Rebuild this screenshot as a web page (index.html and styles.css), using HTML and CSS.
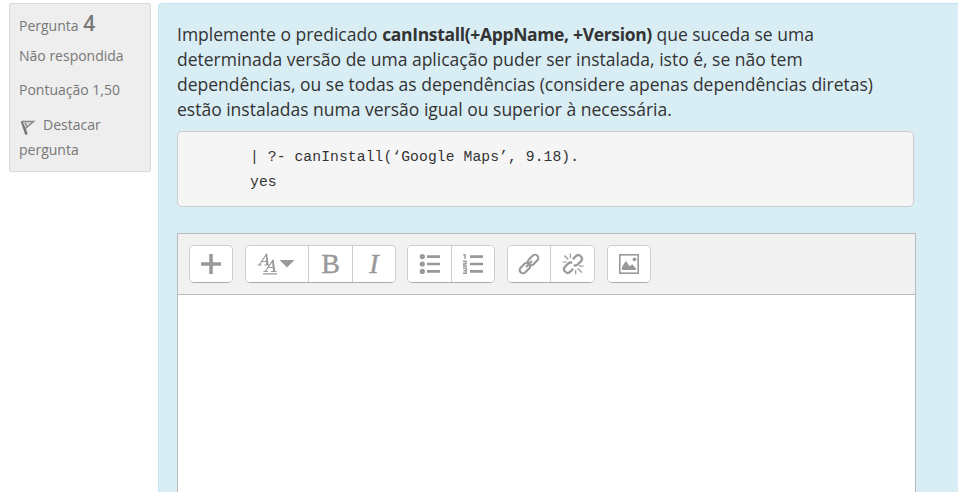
FILE: index.html
```html
<!DOCTYPE html>
<html lang="pt">
<head>
<meta charset="utf-8">
<title>Pergunta 4</title>
<link rel="stylesheet" href="styles.css">
</head>
<body>
<div class="question">
  <aside class="info">
    <h3 class="number">Pergunta <b>4</b></h3>
    <p class="state">Não respondida</p>
    <p class="grade">Pontuação 1,50</p>
    <p class="flag"><svg class="flag-icon" width="16" height="17" viewBox="0 0 16 17"><path d="M2 2 6.5 15.5" stroke="#777" stroke-width="2.6" fill="none"/><path d="M2.5 2.6H13.5L5.7 9.2" fill="#ddd" stroke="#888" stroke-width="1.5"/><path d="m5 4 2 3.5" stroke="#888" stroke-width="1.5"/></svg>Destacar<br>pergunta</p>
  </aside>
  <main class="content">
    <p class="text">Implemente o predicado <b>canInstall(+AppName, +Version)</b> que suceda se uma<br>
    determinada versão de uma aplicação puder ser instalada, isto é, se não tem<br>
    dependências, ou se todas as dependências (considere apenas dependências diretas)<br>
    estão instaladas numa versão igual ou superior à necessária.</p>
    <pre class="code">| ?- canInstall(‘Google Maps’, 9.18).
yes</pre>
    <div class="editor">
      <div class="toolbar">
        <div class="group">
          <button class="btn"><svg width="22" height="22" viewBox="0 0 22 22"><path d="M1 11H21M11 1V21" stroke="#999" stroke-width="3.6"/></svg></button>
        </div>
        <div class="group">
          <button class="btn wide"><svg class="styles-icon" width="38" height="22" viewBox="0 0 38 22"><path d="M.5 12H4.500M7.500 12H12M2.200 12 9.300 1.500 10.200 12M4.800 8.500H9.800" fill="none" stroke="#999" stroke-width="1.200"/><path d="M8.800 1H10.200L11.600 12H9.300Z" fill="#999"/><path d="M6.500 18.500H11M14 18.500H19.500M8.200 18.500 15.800 7.500 16.800 18.500M11 14.500H16.300M6 20.800H20" fill="none" stroke="#999" stroke-width="1.200"/><path d="M15.300 7H16.700L18.300 18.500H16Z" fill="#999"/><path d="M22.500 7h15L30 14.500Z" fill="#999"/></svg></button>
          <button class="btn bold">B</button>
          <button class="btn italic">I</button>
        </div>
        <div class="group lists">
          <button class="btn"><svg width="22" height="22" viewBox="0 0 22 22"><g fill="#999"><circle cx="3.300" cy="3.600" r="2.600"/><circle cx="3.300" cy="11" r="2.600"/><circle cx="3.300" cy="18.400" r="2.600"/></g><path d="M8 3.600H21M8 11H21M8 18.400H21" stroke="#999" stroke-width="2.600"/></svg></button>
          <button class="btn"><svg width="22" height="22" viewBox="0 0 22 22"><path d="M8 3.600H21M8 11H21M8 18.400H21" stroke="#999" stroke-width="2.600"/><path d="M1.200 1.800H3V6M1 8.200H4V10.800H1.800V13H5M1 15.200H4.200V20.300H1M1.500 17.800H4" fill="none" stroke="#999" stroke-width="1.400"/></svg></button>
        </div>
        <div class="group">
          <button class="btn"><svg width="22" height="22" viewBox="0 0 22 22"><g fill="none" stroke="#999" stroke-width="2.100"><rect x="9.100" y="3.600" width="12" height="6.600" rx="3.300" transform="rotate(-45 15.100 6.900)"/><rect x=".9" y="11.800" width="12" height="6.600" rx="3.300" transform="rotate(-45 6.900 15.100)"/><path d="m8 14 6-6"/></g></svg></button>
          <button class="btn"><svg width="22" height="22" viewBox="0 0 22 22"><g fill="none" stroke="#999" stroke-width="2.300"><path d="m10.800 6.200 3-3c3-3 8.300 1.500 5.200 5l-3.500 3.500c-1.300 1.100-2.500 1-3.600.4M11.200 15.800l-3 3c-3 3-8.300-1.500-5.200-5l3.500-3.500c1.300-1.100 2.500-1 3.600-.4"/><path d="M8.300.5v4.500M2.300 2.500l4 4M.5 9H5M13.700 17V21.500M15.800 15.500l4 4M17 13.200H21.500" stroke-width="1.200"/></g></svg></button>
        </div>
        <div class="group">
          <button class="btn"><svg width="22" height="22" viewBox="0 0 22 22"><rect x="1.800" y="1.800" width="18.400" height="18.400" fill="none" stroke="#999" stroke-width="1.600"/><path d="M4 17V14L7.800 8l4 5.200 2.400-2 3.800 4.300V17Z" fill="#999"/><circle cx="16.500" cy="6.300" r="1.900" fill="#999"/></svg></button>
        </div>
      </div>
      <div class="area"></div>
    </div>
  </main>
</div>
</body>
</html>
```
FILE: styles.css
```css
* { box-sizing: border-box; }
body { margin: 0; background: #fff; font-family: "Open Sans", sans-serif; }
.question { display: flex; align-items: flex-start; gap: 7px; height: 492px; overflow: hidden; padding: 3px 0 0 9px; }
.info { width: 142px; height: 169px; flex: none; padding: 9px 9px 0; border: 1px solid #d9d9d9; border-radius: 2px; background: #eee; color: #777; font-size: 14px; line-height: 25px; }
.info p, .info h3 { margin: 0; white-space: nowrap; }
.info .number { font-size: 14px; font-weight: 400; height: 30px; line-height: 25px; }
.number b { font-size: 21px; line-height: 20px; font-weight: 600; margin-left: 1px; }
.state { height: 34px; }
.grade { height: 35px; }
.flag-icon { margin: 0 7px 0 1px; vertical-align: -6px; }
.content { width: 810px; height: 489px; flex: none; padding: 18px 18px 0; border: 1px solid #bce8f1; border-bottom: 0; border-radius: 4px 4px 0 0; background: #d9edf5; }
.text { margin: 0; color: #333; font-size: 17.5px; line-height: 25px; height: 100px; white-space: nowrap; }
.text b { font-weight: 700; letter-spacing: -.34px; }
.code { width: 737px; height: 76px; margin: 9px 0 26px; padding: 13px 0 0 72px; border: 1px solid #ccc; border-radius: 5px; background: #f5f5f5; color: #333; font: 14.67px/25px "Liberation Mono", monospace; letter-spacing: .1px; }
.editor { width: 739px; height: 260px; border: 1px solid #bbb; border-bottom: 0; background: #fff; }
.toolbar { height: 61px; display: flex; gap: 12px; padding: 11px; background: #f1f1f1; border-bottom: 1px solid #bbb; }
.group { display: flex; flex: none; height: 38px; border: 1px solid #ccc; border-bottom-color: #aaa; border-radius: 5px; background: #fff; overflow: hidden; }
.group.lists { margin-left: -1px; }
.btn { width: 42px; height: 36px; flex: none; padding: 0; border: 0; background: #fff; color: #999; display: flex; align-items: center; justify-content: center; }
.btn + .btn { width: 44px; border-left: 1px solid #ccc; }
.btn + .btn.italic { width: 43px; }
.lists .btn:first-child { width: 43px; }
.lists .btn + .btn { width: 43px; }
.btn.wide { width: 62px; }
.bold, .italic { font: 28px/36px "Liberation Serif", serif; -webkit-text-stroke: .4px #999; }
.italic { font-style: italic; }
.styles-icon { margin-right: 2px; }
```
